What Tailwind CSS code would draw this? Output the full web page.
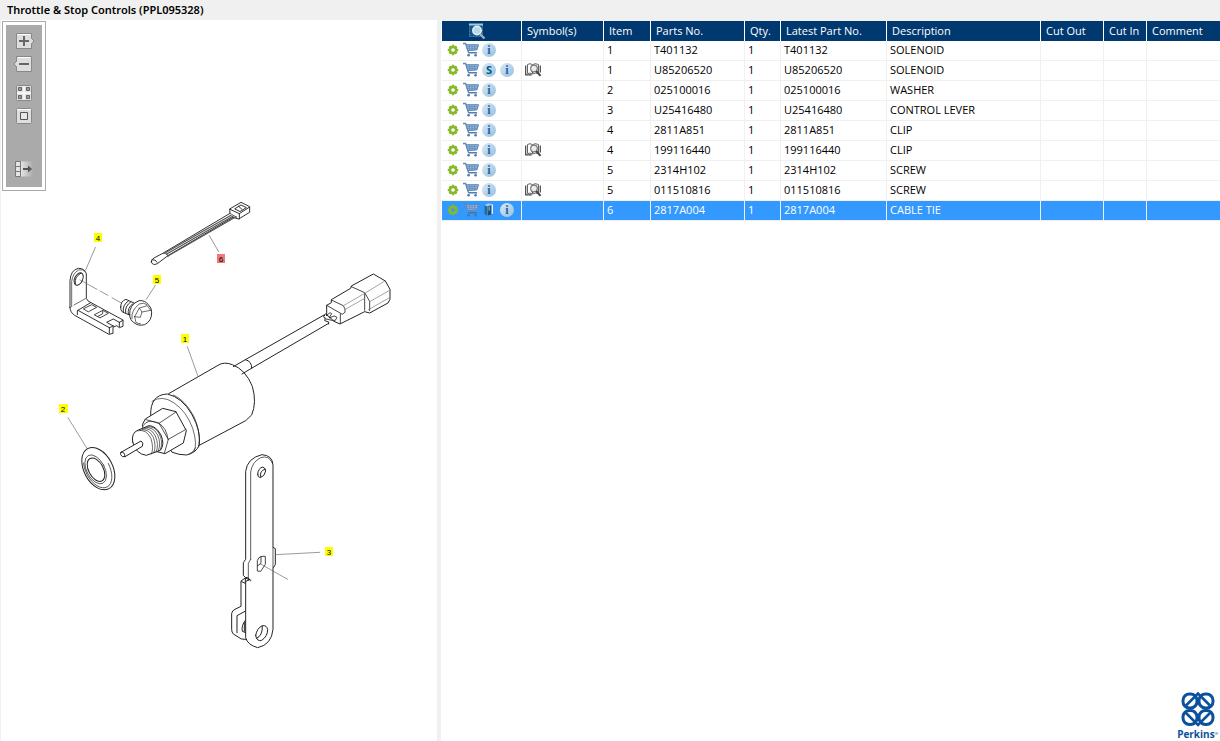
<!DOCTYPE html>
<html lang="en">
<head>
<meta charset="utf-8">
<meta name="viewport" content="width=device-width, initial-scale=1">
<title>Throttle &amp; Stop Controls (PPL095328)</title>
<script src="https://cdn.jsdelivr.net/npm/@tailwindcss/browser@4"></script>
</head>
<body class="flex h-screen flex-col overflow-hidden bg-white font-['Open_Sans','Noto_Sans',sans-serif] text-[11px] text-black">

<!-- Shared icons -->
<svg class="absolute size-0" aria-hidden="true">
  <defs><linearGradient id="dg" x1="0" y1="0" x2="1" y2="1"><stop stop-color="#dcebf6"/><stop offset="1" stop-color="#94bede"/></linearGradient></defs>
  <symbol id="gear" viewBox="0 0 18 18">
    <g stroke="#86b829" stroke-width="2.4"><path d="M9 3.8v10.400M3.800 9h10.400M5.400 5.400l7.200 7.200M12.600 5.400l-7.200 7.200"/></g>
    <circle cx="9" cy="9" r="2.900" fill="none" stroke="#86b829" stroke-width="2.200"/>
    <circle cx="9" cy="9" r="1.800" class="fill-[var(--hub)]"/>
  </symbol>
  <symbol id="cart" viewBox="0 0 18 18">
    <path d="M1 2.500h2.600l3 9.200" fill="none" stroke="#5b87b9" stroke-width="1.300"/>
    <path d="M4.200 3.700h12.300l-1.600 5.200-9.200.8z" fill="#9dbbdc" stroke="#5b87b9"/>
    <path d="M4.600 5.700h11.600M5.200 7.700h10.400M7.500 4v5.400M10 4v5.200M12.600 4v5" stroke="#5b87b9" stroke-width=".7"/>
    <path d="M6.300 11.800h8.800" stroke="#46719f" stroke-width="1.400"/>
    <circle cx="6.600" cy="14.200" r="1.300" fill="#4a76a8"/><circle cx="13.600" cy="14.200" r="1.300" fill="#4a76a8"/>
  </symbol>
  <symbol id="disc" viewBox="0 0 18 18">
    <circle cx="9" cy="9" r="7" fill="url(#dg)"/>
  </symbol>
  <symbol id="book" viewBox="0 0 18 18">
    <path d="M4.500 4l3 1.500v9.500l-3-2z" fill="#2b6a94"/><path d="M4.500 4l4-1.700 4.500 1-5.500 2.200z" fill="#9bc9e6"/>
    <path d="M7.500 5.500l5.500-2.200v9.200L7.500 15z" fill="#e3f0f8"/><path d="M7.500 5.500l4-1.600v9.500l-4 1.600z" fill="#194f77"/><path d="M8.300 6l1.800-.7v4l-1.800.7z" fill="#4f9bc6"/>
  </symbol>
  <symbol id="lookup" viewBox="0 0 18 18">
    <path d="M3.500 3.500Q6 1.800 8.500 3.700 11 1.800 14.500 3.500v9Q11 11.500 8.500 13 6 11.500 3.500 12.500z" fill="#fff" stroke="#666"/>
    <path d="M1.700 4.500v9.300h6M16.300 4.500v7M8.500 4v8.500" fill="none" stroke="#444" stroke-width="1.200"/>
    <circle cx="10" cy="7.500" r="3.300" fill="#ececec" stroke="#777" stroke-width="1.200"/>
    <path d="M12.200 10l4.300 4.800" stroke="#444" stroke-width="2"/>
  </symbol>
</svg>

<header class="flex h-5 shrink-0 items-center bg-[#f0f0f0] pl-[7px]">
  <h1 class="font-['Noto_Sans','Open_Sans',sans-serif] font-semibold leading-5">Throttle &amp; Stop Controls (PPL095328)</h1>
</header>

<main class="flex min-h-0 flex-1">
  <section class="relative w-[437px] shrink-0 overflow-hidden border-l border-[#f0f0f0]" aria-label="Parts drawing">
    <svg viewBox="1 20 436 721" class="block w-full font-['Liberation_Sans',sans-serif]" fill="none" stroke-linejoin="round" stroke-linecap="round">
      <!-- bracket, bolt and cable tie -->
      <g transform="translate(50 190) scale(.33333)" stroke="#222" stroke-width="2.8">
        <path fill="#fff" d="M304 216q-2-6 8-12l28-15 200-119-1-13 34-20 26 13v17l-33 20-17-5-194 114-33 25q-14 7-18-5z"/>
        <path d="M306 209q10-2 16 8M540 58l28 13 31-20M568 71v16M555 56l18-11 16 8-18 11zM566 49l10 9"/>
        <path d="M340 190q14-2 14 10M540 70l20 12" stroke-width="2"/>
        <path d="M346 188l197-112M349 193l202-116M354 198l204-118" stroke="#555" stroke-width="3.500"/>
        <path fill="#fff" d="M60 352V272q2-32 25-37 20 0 24 17v73q3 9 14 13l96 52v19l-11 4-8-6-11 5v18l-12 3-103-57q-14-9-14-24z"/>
        <path d="M65 350v-76q4-26 21-34 12-4 18 4M72 345l34-19" stroke-width="2"/>
        <path d="M82 374v-12l40-24M84 361l94 52v17M178 413l12-5M190 408l-20-11 20-10 18 10M208 397l11-6M208 397v13"/>
        <path d="M101 356l24-12 15 8-24 13zM134 374l24-13 17 9-24 13zM144 379l14-8v-8" stroke-width="2.500"/>
        <ellipse cx="86" cy="267" rx="12" ry="20" transform="rotate(25 86 267)"/>
        <path d="M76 281q-4-20 16-31"/>
        <path d="M136 172l-29 68M478 137l28 48M316 286l-27 42" stroke="#666" stroke-width="2"/>
        <path d="M90 270l51 28M150 303l24 13M186 323l28 16" stroke="#666" stroke-width="2"/>
        <path fill="#fff" d="M212 351q0-18 16-23l28 13-8 38-31-13q-6-5-5-15z"/>
        <path d="M220 366q-4-20 16-34M227 369q-4-20 16-34M235 373q-4-20 14-32"/>
        <path fill="#fff" d="M239 374q-2-30 28-42 18-2 28 12 10 9 10 22 1 27-21 38-20 5-32-6-13-8-13-24z"/>
        <path d="M246 386q-4-24 22-44 14-6 23 2M254 380l14-26 24-7 10 14M254 380l4 18 14 4M268 354l8 12-5 16-17-2M276 366l26-5" stroke-width="2"/>
      </g>
      <!-- solenoid body and washer -->
      <g transform="translate(50 320) scale(.33333)" stroke="#222" stroke-width="3">
        <path fill="#fff" d="M356 221l148-85q18-12 43-2 40 15 60 65 14 48-2 86l-18 17-145 77"/>
        <path fill="#fff" d="M302 286q-2-62 50-64 44 10 73 60 28 50 23 92-8 24-38 31-25 0-43-8z"/>
        <path d="M306 244q30-20 65 4 39 26 57 77 15 48 4 70M370 225q34 13 62 65 22 50 14 91M418 402q12-5 19-19" stroke-width="2"/>
        <path fill="#fff" d="M278 312l8-15 52-32 40 10 31 57-9 37-55 32-40-10-25-60z"/>
        <path d="M288 299l39 11 51-34M327 310l28 48 53-30M355 358l-12 42M280 316q13-21 45-7 25 14 29 49" stroke-width="2.300"/>
        <path fill="#fff" d="M248 366q-5-28 17-36l32-13q20 0 36 28 12 28-2 46l-42 15q-32-4-41-40z"/>
        <path d="M263 332q26-6 40 24 9 30 1 46M270 330q26-6 40 22 10 28 1 47M277 327q26-6 39 21 12 28 2 48M284 324q25-6 39 21 11 25 2 47M290 321q25-5 38 21 12 24 3 47" stroke-width="2"/>
        <path fill="#fff" d="M213 397l60-34q9 5 4 16l-52 31q-9 3-13-6-1-5 1-7z"/>
        <path d="M213 397q11-4 12 13"/>
        <path d="M412 80l32 89M54 293l58 94" stroke="#666" stroke-width="2"/>
        <ellipse cx="145" cy="446" rx="43" ry="68" transform="rotate(-28 145 446)" fill="#fff"/>
        <ellipse cx="143" cy="447" rx="36" ry="61" transform="rotate(-28 143 447)" stroke-width="2" stroke-dasharray="190 130"/>
        <ellipse cx="137" cy="448" rx="27" ry="47" transform="rotate(-28 137 448)" stroke-width="2"/>
        <ellipse cx="138" cy="449" rx="22" ry="38" transform="rotate(-28 138 449)"/>
      </g>
      <!-- cable and connector -->
      <g transform="translate(230 260) scale(.33333)" stroke="#222" stroke-width="3">
        <path d="M10 320l36-21 238-135M36 342l30-18 230-134M46 299q20 4 19 26M284 166q-8 6 2 8l-2 8 12 4v6"/>
        <path fill="#fff" d="M290 166v-30l14-8v-9l58-34 2-7 66-36 36 21 14 25v30l-6 11-55 30-15-4-74 37-18-8-24-22z"/>
        <path d="M304 120l36 17 5 10v10l-8 6-47-27M331 162v28M364 80l40 18 15 26v28M290 166l10-8 5 3-8 13 16-6 8 4-5 9h-10l-18-4M404 101v50" stroke-width="2.500"/>
        <path d="M342 136l64-37 60-37M346 148l58-33M419 125l60-34M415 149l62-35" stroke="#777" stroke-width="2"/>
      </g>
      <!-- control lever -->
      <g transform="translate(210 440) scale(.33333)" stroke="#222" stroke-width="3">
        <path fill="#fff" d="M107 598l-13-1-24-15q-5-5-5-14v-48q2-9 10-12l18-9v-76l13-9 14 6v178z"/>
        <path d="M81 578v-51l26-14M106 414v16l-11-5M106 430l14-9M107 540q-14 16-10 34l10 4M103 548v26"/>
        <path fill="#fff" d="M106 412l-6-6v-38l7-10V94q5-40 49-50 32 2 33 32v246l7 4v48l-7 10v184q-4 46-46 55-30-8-36-30V424l13-5-7-6z"/>
        <path d="M122 358V96q4-30 30-43 25-9 36 18M122 358l-7 12v48M122 419v4M189 322v60" stroke-width="2.200"/>
        <path d="M143 103q1-19 16-22 8 4 8 12-3 16-16 20-8-1-8-10zM152 110q-4-18 13-22"/>
        <path d="M142 392v-30q3-12 14-13h10v24l-13 20zM142 378l11-8v-20" stroke-width="2.500"/>
        <path d="M137 586q4-22 20-29 14-2 16 12 0 20-18 32-15 5-18-15zM140 595q18-8 17-36"/>
        <path d="M150 371l83 47M197 344l132-7" stroke="#666" stroke-width="2"/>
      </g>
      <!-- callouts -->
      <g fill="#ff0">
        <path d="M94 233h8v9h-8zM153 275h8v9h-8zM181 334h8v9h-8zM59 404h9v9h-9zM325 547h8v9h-8z"/>
        <path d="M217 254h8v9h-8z" fill="#f07878"/>
      </g>
      <g fill="#000" font-size="8" text-anchor="middle">
        <text x="98" y="241">4</text><text x="157" y="283">5</text><text x="185" y="342">1</text><text x="63" y="412">2</text><text x="329" y="555">3</text><text x="221" y="262">6</text>
      </g>
    </svg>

    <!-- drawing tools -->
    <div class="absolute left-px top-px border border-[#aaa] bg-white p-[3px]">
      <div class="flex w-9 flex-col items-center bg-[#aaa] pt-[7px] pb-[9px]" role="toolbar" aria-label="Drawing tools">
        <button class="mb-[5px]" aria-label="Zoom in"><svg class="block h-[18px] w-5" viewBox="-2 -1 20 18"><path d="M.5.500h15v5L18 8l-2.500 2.500v5H.500z" fill="#dedede" stroke="#888"/><path d="M1.500 1.500h13" stroke="#fff"/><path d="M8 3v10M3 8h10" stroke="#666" stroke-width="2"/></svg></button>
        <button class="mb-[11px]" aria-label="Zoom out"><svg class="block h-[18px] w-5" viewBox="-2 -1 20 18"><path d="M15.500.5H.500v5L-2 8l2.500 2.500v5h15z" fill="#dedede" stroke="#888"/><path d="M2 1.500h13" stroke="#fff"/><path d="M3 8h10" stroke="#666" stroke-width="2"/></svg></button>
        <button class="mb-[5px]" aria-label="Fit to window"><svg class="block h-[18px] w-5" viewBox="-2 -1 20 18"><rect x=".5" y=".5" width="15" height="15" rx="1" fill="#dedede" stroke="#888"/><path d="M8 1v14M1 8h14" stroke="#f4f4f4" stroke-width="2"/><path d="M2.500 2.500h3v3h-3zM10.500 2.500h3v3h-3zM2.500 10.500h3v3h-3zM10.500 10.500h3v3h-3z" fill="#999" stroke="#666"/></svg></button>
        <button class="mb-[35px]" aria-label="Actual size"><svg class="block h-[18px] w-5" viewBox="-2 -1 20 18"><rect x=".5" y=".5" width="15" height="15" rx="1" fill="#dedede" stroke="#888"/><path d="M1 1.500h14" stroke="#fff"/><path d="M4.500 4.500h7v7h-7z" stroke="#555" fill="#e8e8e8"/></svg></button>
        <button aria-label="Show parts list"><svg class="block h-[18px] w-5" viewBox="-2 -1 20 18"><defs><linearGradient id="fade"><stop stop-color="#e4e4e4"/><stop offset="1" stop-color="#aaa"/></linearGradient></defs><path d="M5 .5h12v15H5z" fill="url(#fade)"/><path d="M-.5.500h5v15h-5zM-.5 5.500h5M-.5 10.500h5" fill="#e4e4e4" stroke="#777"/><path d="M7 8h6" stroke="#555" stroke-width="2"/><path d="M12 4.500L16 8l-4 3.500z" fill="#555"/></svg></button>
      </div>
    </div>
  </section>

  <div class="w-1 shrink-0 bg-[#f0f0f0]"></div>

  <section class="flex min-w-0 flex-1 flex-col pl-px" aria-label="Parts list">
    <table class="w-full table-fixed border-separate border-spacing-0 border-t border-[#f0f0f0] text-left leading-[17px]">
      <colgroup><col class="w-20"><col class="w-[82px]"><col class="w-[47px]"><col class="w-[94px]"><col class="w-9"><col class="w-[106px]"><col class="w-[154px]"><col class="w-[63px]"><col class="w-[43px]"><col></colgroup>
      <thead class="bg-[#003870] text-white [&_th]:h-5 [&_th]:whitespace-nowrap [&_th]:border-r [&_th]:border-white [&_th]:p-0 [&_th]:pt-px [&_th]:pl-[5px] [&_th]:align-top [&_th]:font-normal [&_th:last-child]:border-r-0">
        <tr>
          <th scope="col"><button class="ml-[21px] block" aria-label="Search parts"><svg class="h-[18px] w-[18px]" viewBox="0 0 18 18"><path d="M1.500 2.500h13v12h-13z" fill="#1d5685" stroke="#3f83ad" stroke-dasharray="2 1"/><path d="M1 2.500h14" stroke="#9cc9e2" stroke-width="2"/><circle cx="9" cy="8.500" r="4.200" fill="#b8d8ea" stroke="#e5f1f8" stroke-width="1.500"/><path d="M12 12l4.500 4.500" stroke="#a4b2bd" stroke-width="2.200"/></svg></button></th>
          <th scope="col">Symbol(s)</th><th scope="col">Item</th><th scope="col">Parts No.</th><th scope="col">Qty.</th><th scope="col">Latest Part No.</th><th scope="col">Description</th><th scope="col">Cut Out</th><th scope="col">Cut In</th><th scope="col">Comment</th>
        </tr>
      </thead>
      <tbody id="parts" class="[&_td]:h-5 [&_td]:whitespace-nowrap [&_td]:border-b [&_td]:border-r [&_td]:border-[#f0f0f0] [&_td]:p-0 [&_td]:pl-[3px] [&_td]:align-top [&_td:nth-child(-n+2)]:pl-0.5 [&_td:last-child]:border-r-0"></tbody>
    </table>
    <footer class="mt-auto flex justify-end pr-0.5">
      <div class="flex flex-col items-center text-[#0b519b]">
        <svg class="h-[35px] w-[34px]" viewBox="0 0 34 35" fill="none" stroke="currentColor" stroke-width="3" aria-hidden="true">
          <rect x="2" y="2" width="14" height="14" rx="6.500"/><rect x="18" y="2" width="14" height="14" rx="6.500"/><rect x="2" y="18.500" width="14" height="14" rx="6.500"/><rect x="18" y="18.500" width="14" height="14" rx="6.500"/>
          <path d="M4 14.500L17 1.500l13 13M4 20L17 33l13-13" stroke-width="2.600"/>
        </svg>
        <span class="flex text-[10px] font-bold leading-[14px]">Perkins<span class="text-[4px]">®</span></span>
      </div>
    </footer>
  </section>
</main>

<script>
const parts = [
  ['i', 0, '1', 'T401132', 'SOLENOID'],
  ['Si', 1, '1', 'U85206520', 'SOLENOID'],
  ['i', 0, '2', '025100016', 'WASHER'],
  ['i', 0, '3', 'U25416480', 'CONTROL LEVER'],
  ['i', 0, '4', '2811A851', 'CLIP'],
  ['i', 1, '4', '199116440', 'CLIP'],
  ['i', 0, '5', '2314H102', 'SCREW'],
  ['i', 1, '5', '011510816', 'SCREW'],
  ['bi', 0, '6', '2817A004', 'CABLE TIE', true],
];
const icon = (id, label, extra = '') =>
  `<button class="block" aria-label="${label}"><svg class="block h-[18px] w-[18px]" viewBox="0 0 18 18"><use href="#${id}"/>${extra}</svg></button>`;
const marks = {
  i: () => icon('disc', 'Information', `<text x="9" y="13" text-anchor="middle" class="fill-[#2862a5] font-['Liberation_Serif',serif] text-[12px] font-bold">i</text>`),
  S: () => icon('disc', 'Supersession', `<text x="9" y="13" text-anchor="middle" class="fill-[#00598f] font-['Open_Sans',sans-serif] text-[11px] font-bold">S</text>`),
  b: () => icon('book', 'Catalogue'),
};
document.getElementById('parts').innerHTML = parts.map(([m, lookup, item, no, desc, selected]) => `
  <tr class="${selected ? 'bg-[#3399ff] text-white [--hub:#3399ff]' : '[--hub:#ffffff]'}">
    <td><div class="flex">${icon('gear', 'Options')}${icon('cart', 'Add to cart')}${[...m].map(k => marks[k]()).join('')}</div></td>
    <td>${lookup ? icon('lookup', 'Look up symbol') : ''}</td>
    <td>${item}</td><td>${no}</td><td>1</td><td>${no}</td><td>${desc}</td><td></td><td></td><td></td>
  </tr>`).join('');
</script>
</body>
</html>
